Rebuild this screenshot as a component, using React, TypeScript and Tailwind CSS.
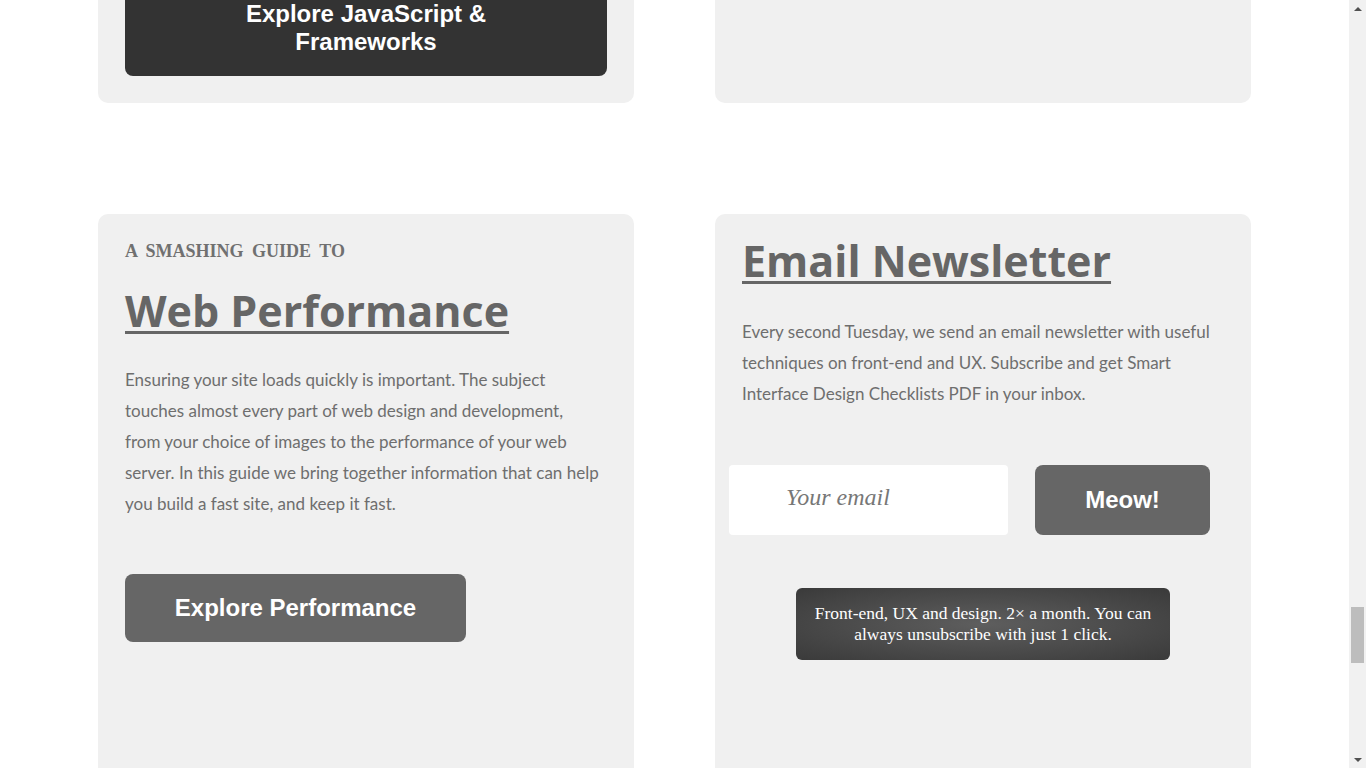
import React from "react";

const heading = "font-['Open_Sans',sans-serif] font-bold text-[43px] leading-[52px] text-[#666] underline decoration-[3px] underline-offset-[4px]";
const para = "font-['Lato',sans-serif] text-[17px] leading-[31px] text-[#6e6e6e] whitespace-nowrap";
const btnText = "font-['Liberation_Sans',Arial,sans-serif] font-bold text-[24px] text-white";

export default function App() {
  return (
    <div className="flex h-[768px] w-full overflow-hidden bg-white">
      <div className="flex-1 overflow-hidden">
        <div className="mx-auto mt-[-47px] w-[1153px]">
          {/* top row */}
          <div className="grid grid-cols-[536px_536px] gap-x-[81px]">
            <div className="rounded-[10px] bg-[#f0f0f0] px-[27px] pt-[27px] pb-[27px]">
              <div className={`rounded-[8px] bg-[#333] px-[20px] pt-[20px] pb-[20px] text-center leading-[28px] ${btnText}`}>
                Explore JavaScript &amp;
                <br />
                Frameworks
              </div>
            </div>
            <div className="rounded-[10px] bg-[#f0f0f0]" />
          </div>

          {/* bottom row */}
          <div className="mt-[111px] grid grid-cols-[536px_536px] gap-x-[81px]">
            <div className="h-[620px] rounded-t-[10px] bg-[#f0f0f0] px-[27px] pt-[27px]">
              <div className="font-['Liberation_Serif',serif] text-[18px] font-bold uppercase leading-[20px] text-[#707070] [word-spacing:4px]">
                A Smashing Guide to
              </div>
              <h2 className={`mt-[24px] ${heading}`}>Web Performance</h2>
              <p className={`mt-[27px] ${para}`}>
                Ensuring your site loads quickly is important. The subject
                <br />
                touches almost every part of web design and development,
                <br />
                from your choice of images to the performance of your web
                <br />
                server. In this guide we bring together information that can help
                <br />
                you build a fast site, and keep it fast.
              </p>
              <div className={`mt-[55px] flex h-[68px] w-[341px] items-center justify-center rounded-[8px] bg-[#666] ${btnText}`}>
                Explore Performance
              </div>
            </div>

            <div className="h-[620px] rounded-t-[10px] bg-[#f0f0f0] pt-[21px]">
              <div className="px-[27px]">
                <h2 className={heading}>Email Newsletter</h2>
                <p className={`mt-[29px] ${para}`}>
                  Every second Tuesday, we send an email newsletter with useful
                  <br />
                  techniques on front-end and UX. Subscribe and get Smart
                  <br />
                  Interface Design Checklists PDF in your inbox.
                </p>
              </div>
              <div className="mt-[56px] flex gap-[27px] px-[14px]">
                <input
                  placeholder="Your email"
                  className="h-[70px] w-[279px] rounded-[4px] bg-white pb-[6px] pl-[57px] font-['Liberation_Serif',serif] text-[24px] italic text-[#555] outline-none placeholder:text-[#777]"
                />
                <div className={`flex h-[70px] w-[175px] items-center justify-center rounded-[8px] bg-[#666] ${btnText}`}>
                  Meow!
                </div>
              </div>
              <div className="mx-auto mt-[53px] w-[374px] rounded-[6px] bg-[radial-gradient(ellipse_at_center,#5e5e5e_0%,#3a3a3a_100%)] px-[10px] py-[15px] text-center font-['Liberation_Serif',serif] text-[17.5px] leading-[21px] text-white">
                Front-end, UX and design. 2× a month. You can
                <br />
                always unsubscribe with just 1 click.
              </div>
            </div>
          </div>
        </div>
      </div>

      {/* scrollbar */}
      <div className="flex h-[768px] w-[17px] flex-col items-center bg-[#f1f1f1]">
        <div className="flex h-[17px] w-full items-center justify-center">
          <div className="h-0 w-0 border-x-[4px] border-b-[4px] border-x-transparent border-b-[#505050]" />
        </div>
        <div className="h-[590px]" />
        <div className="h-[56px] w-[13px] bg-[#bdbdbd]" />
        <div className="flex-1" />
        <div className="flex h-[17px] w-full items-center justify-center">
          <div className="h-0 w-0 border-x-[4px] border-t-[4px] border-x-transparent border-t-[#505050]" />
        </div>
      </div>
    </div>
  );
}
